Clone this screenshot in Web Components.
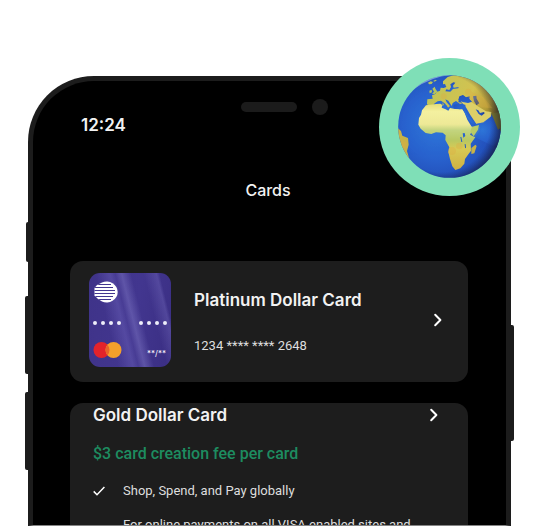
<!DOCTYPE html>
<html lang="en">
<head>
<meta charset="utf-8">
<title>Cards</title>
<style>
html, body { height: 100%; }
body { margin: 0; background: #fff; overflow: hidden; font-family: Inter, "Liberation Sans", sans-serif; }
</style>
</head>
<body>
<phone-stage>
  <globe-badge slot="badge"></globe-badge>
  <phone-frame>
    <status-bar time="12:24"></status-bar>
    <screen-title>Cards</screen-title>
    <card-list>
      <owned-card number="1234 **** **** 2648">Platinum Dollar Card</owned-card>
      <offer-card fee="$3 card creation fee per card">
        <span slot="name">Gold Dollar Card</span>
        <feature-item checked>Shop, Spend, and Pay globally</feature-item>
        <feature-item>For online payments on all VISA enabled sites and</feature-item>
      </offer-card>
    </card-list>
  </phone-frame>
</phone-stage>

<script>
function define(name, template) {
  customElements.define(name, class extends HTMLElement {
    constructor() {
      super();
      const attr = key => this.getAttribute(key) || '';
      this.attachShadow({ mode: 'open' }).innerHTML = template(attr);
    }
  });
}

define('phone-stage', () => `
<style>
  :host { display: block; position: relative; box-sizing: border-box; height: 100vh; padding: 76px 24px 0 28px; overflow: hidden; }
  ::slotted([slot=badge]) { position: absolute; z-index: 2; top: 58px; right: 15px; }
</style>
<slot></slot><slot name="badge"></slot>`);

define('phone-frame', () => `
<style>
  :host { display: block; position: relative; box-sizing: border-box; height: 100%; border: 5px solid #1c1c1c; border-bottom: 1px solid #858585; border-radius: 66px 66px 0 0; background: #000; color: #f2f2f2; }
  .screen { height: 100%; overflow: hidden; }
  .key { position: absolute; background: #1c1c1c; }
  .left { right: 100%; margin-right: 4px; width: 4px; border-radius: 2px 0 0 2px; }
  .mute { top: 141px; height: 40px; width: 3px; }
  .up { top: 215px; height: 78px; }
  .down { top: 311px; height: 78px; }
  .power { left: 100%; margin-left: 4px; top: 244px; width: 4px; height: 116px; border-radius: 0 2px 2px 0; }
</style>
<i class="key left mute"></i><i class="key left up"></i><i class="key left down"></i><i class="key power"></i>
<div class="screen"><slot></slot></div>`);

define('status-bar', attr => `
<style>
  :host { display: grid; grid-template-columns: 1fr auto 1fr; padding: 18px 48px 0; height: 64px; box-sizing: border-box; }
  time { font: 600 17px/20px Inter, sans-serif; padding-top: 16px; }
  .notch { display: flex; gap: 15px; align-items: center; height: 16px; padding-left: 30px; }
  .speaker { width: 56px; height: 10px; border-radius: 5px; background: #1b1b1b; }
  .camera { width: 16px; height: 16px; border-radius: 50%; background: #1b1b1b; }
</style>
<time>${attr('time')}</time>
<div class="notch"><span class="speaker"></span><span class="camera"></span></div>`);

define('screen-title', () => `
<style>
  :host { display: block; padding: 34px 0 60px; }
  h1 { margin: 0; padding-right: 3px; font: 500 16px/22px Inter, sans-serif; text-align: center; }
</style>
<h1><slot></slot></h1>`);

define('card-list', () => `
<style>
  :host { display: flex; flex-direction: column; gap: 21px; padding: 0 38px 0 37px; }
</style>
<slot></slot>`);

const surface = 'background: #1d1d1d; border-radius: 13px;';
const chevronStyle = `
  button { appearance: none; border: 0; padding: 0; background: none; color: #fff; width: 16px; height: 20px; display: grid; place-items: center; }`;
const chevron = label => `<button type="button" aria-label="${label}">
  <svg width="10" height="14" viewBox="0 0 10 14" fill="none" stroke="currentColor" stroke-width="2" stroke-linecap="round" stroke-linejoin="round"><path d="M2.2 1.8 7.4 7 2.2 12.2"/></svg></button>`;

define('owned-card', attr => `
<style>
  :host { display: flex; align-items: center; gap: 23px; min-height: 121px; box-sizing: border-box; padding: 12px 22px 15px 19px; ${surface} }
  .text { flex: 1; display: flex; flex-direction: column; gap: 24px; padding-top: 4px; }
  h2 { margin: 0; font: 600 17px/24px Inter, sans-serif; }
  p { margin: 0; font: 400 13px/20px Roboto, sans-serif; color: #dedede; }
  ${chevronStyle}
</style>
<card-art></card-art>
<div class="text"><h2><slot></slot></h2><p>${attr('number')}</p></div>
${chevron('Open card')}`);

define('card-art', () => `
<style>
  :host { display: flex; flex-direction: column; justify-content: space-between; box-sizing: border-box; width: 82px; height: 94px; padding: 8px 4px 9px; border-radius: 11px; color: #fff;
    background:
      linear-gradient(76deg, transparent 28%, #7a70c855 42%, #665bb530 47%, #8b84d066 53%, transparent 62%, transparent 74%, #8077c850 86%, transparent 89%),
      linear-gradient(100deg, #3f3389, #42368f 55%, #3a2e83); }
  svg { display: block; }
  .dots { display: flex; justify-content: space-between; }
  .foot { display: flex; justify-content: space-between; align-items: flex-end; }
  small { font: 400 8px/10px Inter, sans-serif; padding-right: 1px; }
</style>
<svg width="25" height="22" viewBox="0 0 25 22">
  <defs><clipPath id="c"><path d="M9 1.500A11 10.500 0 1 1 9 20.500L5 18 1.500 14.500V7L4 4z"/></clipPath></defs>
  <g clip-path="url(#c)"><rect width="25" height="22" fill="#fff"/>
  <g stroke="#43378f" stroke-width="1.200"><path d="M2 3.500H18M1 6.500H20M0 9.500H22M0 12.500H22M1 15.500H20M3 18.500H18"/></g></g>
</svg>
<div class="dots">
  <svg width="29" height="4" viewBox="0 0 29 4" fill="#eeeefa"><circle cx="2" cy="2" r="2"/><circle cx="10" cy="2" r="2"/><circle cx="18" cy="2" r="2"/><circle cx="26" cy="2" r="2"/></svg>
  <svg width="29" height="4" viewBox="0 0 29 4" fill="#eeeefa"><circle cx="3" cy="2" r="2"/><circle cx="11" cy="2" r="2"/><circle cx="19" cy="2" r="2"/><circle cx="27" cy="2" r="2"/></svg>
</div>
<div class="foot">
  <svg width="29" height="16" viewBox="0 0 29 16"><circle cx="8.500" cy="8" r="8" fill="#e3232b"/><circle cx="20.500" cy="8" r="8" fill="#f4a02b"/><path d="M14.500 2.700a8 8 0 0 1 0 10.600a8 8 0 0 1 0-10.600" fill="#e8642b"/></svg>
  <small>**/**</small>
</div>`);

define('offer-card', attr => `
<style>
  :host { display: block; padding: 0 26px 24px 23px; ${surface} }
  header { display: flex; justify-content: space-between; align-items: center; }
  h2 { margin: 0; font: 600 17px/24px Inter, sans-serif; }
  .fee { margin: 15px 0 13px; font: 500 16px/24px Roboto, sans-serif; color: #1d8c60; }
  ${chevronStyle}
</style>
<header><h2><slot name="name"></slot></h2>${chevron('Open offer')}</header>
<p class="fee">${attr('fee')}</p>
<div role="list"><slot></slot></div>`);

define('feature-item', () => `
<style>
  :host { display: flex; align-items: center; gap: 18px; height: 24px; margin-bottom: 10px; font: 400 13px/20px Roboto, sans-serif; color: #dedede; white-space: nowrap; }
  svg { visibility: hidden; flex: none; }
  :host([checked]) svg { visibility: visible; }
</style>
<svg width="12" height="10" viewBox="0 0 12 10" fill="none" stroke="#fff" stroke-width="1.500"><path d="M.7 5.400 4 8.700 11.400 1"/></svg>
<span><slot></slot></span>`);

define('globe-badge', () => `
<style>
  :host { display: block; width: 141px; height: 138px; }
  svg { display: block; width: 100%; height: 100%; }
</style>
<svg viewBox="27 24 423 414" role="img" aria-label="Globe">
  <defs>
    <clipPath id="g"><circle cx="238.500" cy="229.500" r="154"/></clipPath>
    <radialGradient id="sea" cx=".38" cy=".48" r=".65"><stop offset="0" stop-color="#2f79db"/><stop offset=".5" stop-color="#2861cd"/><stop offset=".8" stop-color="#2350ba"/><stop offset="1" stop-color="#20398a"/></radialGradient>
    <linearGradient id="af" x1="0" y1="0" x2="0" y2="1"><stop offset="0" stop-color="#e6dd76"/><stop offset=".12" stop-color="#f4f0a0"/><stop offset=".31" stop-color="#eee997"/><stop offset=".4" stop-color="#c3d580"/><stop offset=".55" stop-color="#b9c862"/><stop offset=".68" stop-color="#d8ca55"/><stop offset="1" stop-color="#cfb042"/></linearGradient>
    <linearGradient id="eu" x1="0" y1="0" x2="1" y2=".4"><stop offset="0" stop-color="#bcc659"/><stop offset=".6" stop-color="#d3c250"/><stop offset=".85" stop-color="#b39b38"/><stop offset="1" stop-color="#6d5d22"/></linearGradient>
    <radialGradient id="shade" cx=".42" cy=".47" r=".6"><stop offset=".76" stop-color="#14183c" stop-opacity="0"/><stop offset="1" stop-color="#101020" stop-opacity=".75"/></radialGradient>
  </defs>
  <ellipse cx="238.500" cy="231" rx="211.500" ry="207" fill="#7fdfb7"/>
  <g clip-path="url(#g)">
    <rect x="80" y="70" width="320" height="320" fill="url(#sea)"/>
    <path fill="url(#eu)" d="M171 162l1-14 16-2-2-10 10-4 6-7 8-3 2-9 9 1 8-3-4-9-6 1 0-9 14-13 20-6 16 2 22-2 55 16 40 48 20 65-12 45-4-10-5-22-12-18-17 2-14-6-22-10-12-8-1-14-20-6-17 5-12-9-10 6-3 9-10-16-9-4 4 9 9 10-5 4-10-11-11-8-10 2-9 6-7 9-4 8z"/>
    <path fill="url(#sea)" d="M229 118l9 2 5-9-2-8 9-6 6 1-7 9 2 6 15-2-1 4-16 2-8 8-15-1zM265 157l2-12 11-9 10 7 11-3-2 7 8 10-12 4-15-3zM309 139l10-2 1 9 8 14-8 5-8-11z"/>
    <path fill="#b6c45d" d="M187 116l7-6 3 8 6 8-9 6-8-1 6-6zM178 122l7-3 1 8-7 3zM174 98l8-4 7 2-4 6-8 1zM190 92l8-3 2 3-8 3z"/>
    <path fill="#c9bb4c" d="M218 157l4 8-5 2zM231 166l9 2-6 5zM268 172l10 1-6 3z"/>
    <path fill="url(#af)" d="M168 166l31-4 12-1 6 4-2 8 12 5 8 4 5-8 15 3 22 1 7 11 8 20 12 20 8 6 18-5-3 14-11 18-14 19 1 21-9 12-9 13-2 14-12 14-15 5-9-11-7-22-5-21 3-14-12-22 1-14-9-8-20-1-14 5-17-3-15-13-7-12 2-20 6-10 3-13z"/>
    <path fill="#ddcf69" d="M270 150l30 4 22 14 26 16 16 2-1 14-22 19-22 3-18-27-12-21z"/>
    <path fill="url(#sea)" d="M250 164l16-3 20 3 1 11-18 3-18-3zM265 150l3-11 11-4 9 7 11-3-1 8 8 8-12 4-16-3zM280 180l5-1 10 20 20 19 0 5-9-2-14-18zM317 178l8 3 5 8 12-3 2 4-9 7-9-5zM278 250l6-1 2 9-6 5zM271 261l3 0 3 15-3 0zM284 282l3 1 1 12-3-2z"/>
    <path fill="url(#sea)" d="M317 222l23-5 22-17 4-10 12 6 6 38 16 20-20 40-80-40z" opacity=".9"/>
    <path fill="#7e7b2c" d="M364 190l28-4v48l-8 5-9-22z"/>
    <path fill="#c8b348" d="M304 294l12-10 4 4-7 22-9 2zM84 235l9 8 4 14 17 7 2 20-5 19 8 28-19-17-18-45z"/>
    <path fill="#b9cc66" d="M306 230l21-5-3 14-13 20-10-14z"/>
    <g fill="#ddac42" opacity=".35"><circle cx="246" cy="303" r="12"/><circle cx="268" cy="288" r="10"/><circle cx="221" cy="139" r="9"/><circle cx="295" cy="126" r="10"/><circle cx="100" cy="284" r="10"/><path d="M292 120l49 22 27 33-34-3-38-28z"/></g>
    <path d="M129 119q35-40 99-44l15 0q-60 5-114 44" fill="#fff" opacity=".4"/>
    <rect x="80" y="70" width="320" height="320" fill="url(#shade)"/>
  </g>
</svg>`);
</script>
</body>
</html>
